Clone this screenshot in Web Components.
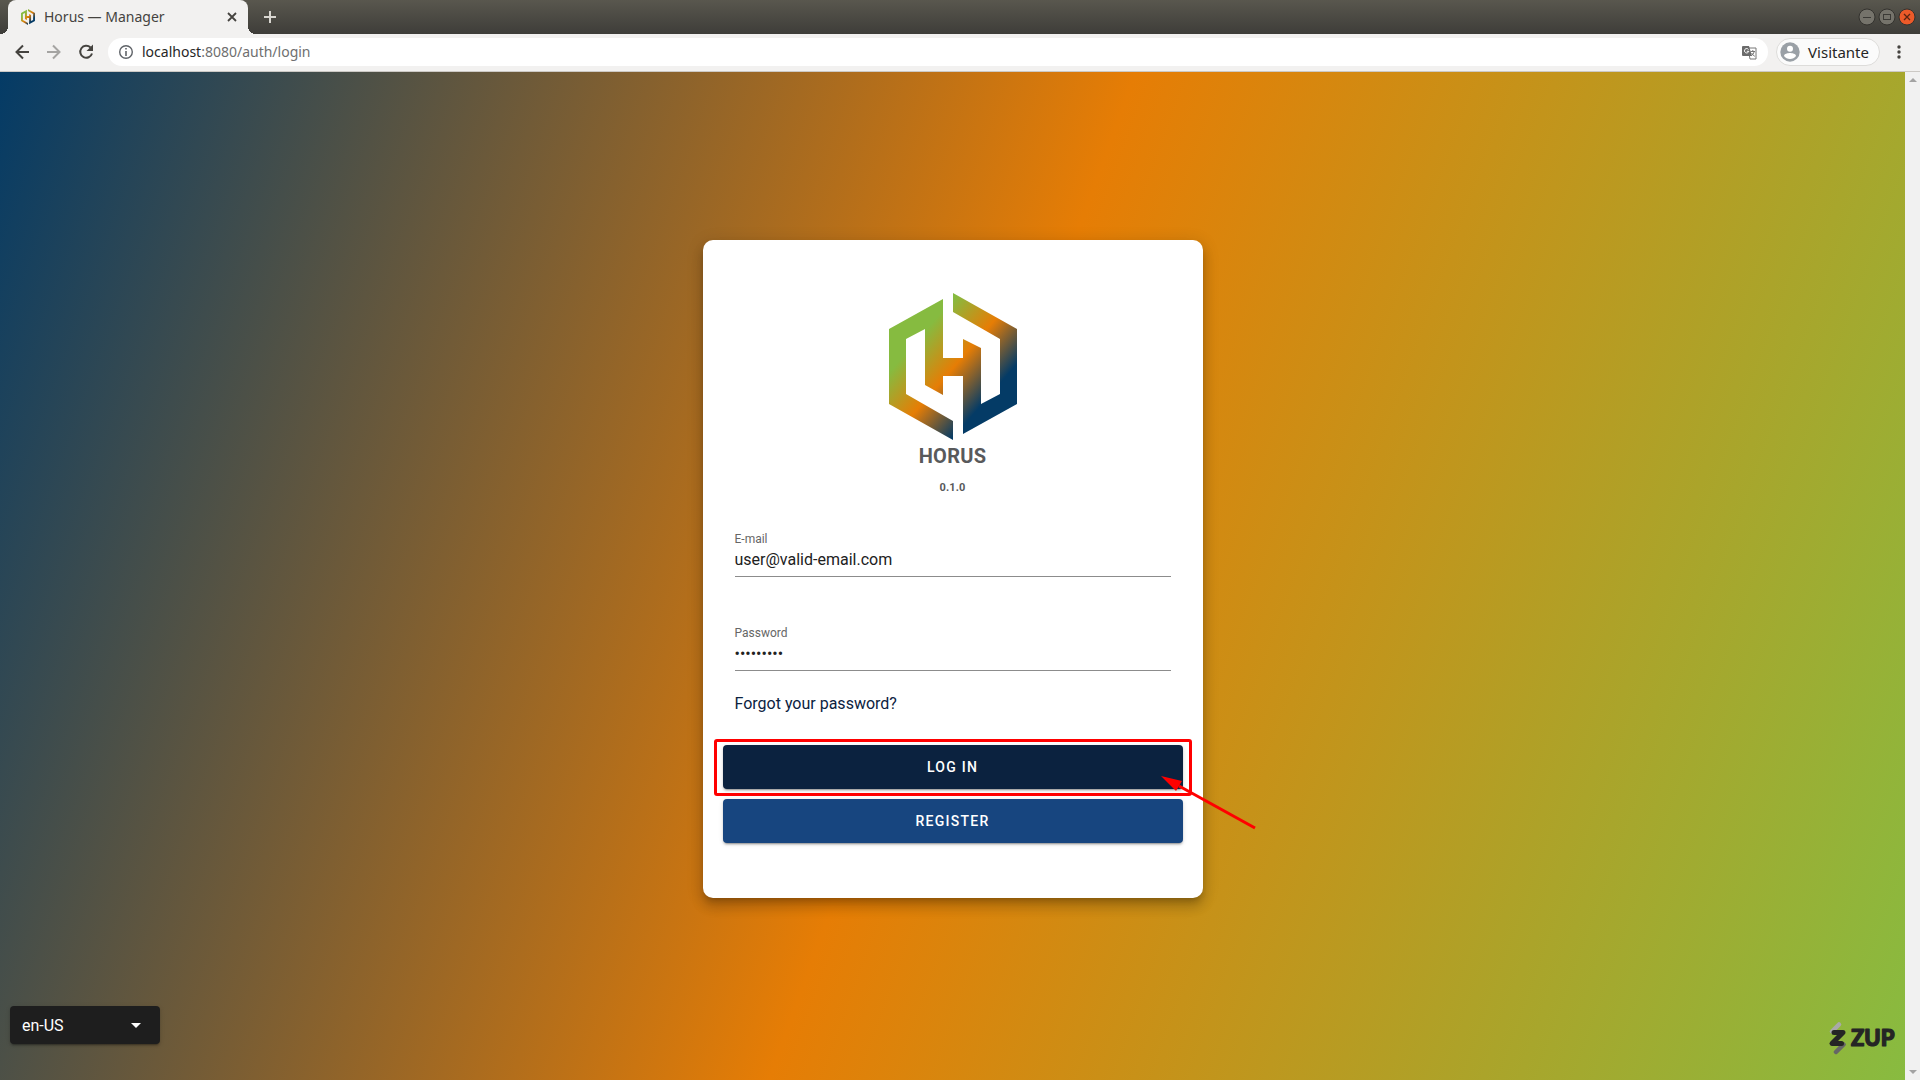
<!DOCTYPE html>
<html lang="en">
<head>
<meta charset="utf-8">
<title>Horus — Manager</title>
<style>
html, body { margin: 0; height: 100%; }
body { font-family: Roboto, "Liberation Sans", sans-serif; overflow: hidden; }
</style>
</head>
<body>
<browser-window>
  <browser-tab slot="tabs">Horus — Manager</browser-tab>
  <login-page>
    <login-card>
      <text-field label="E-mail" type="email" value="user@valid-email.com"></text-field>
      <text-field label="Password" type="password" value="password1"></text-field>
      <forgot-link>Forgot your password?</forgot-link>
      <action-button slot="actions" highlighted>LOG IN</action-button>
      <action-button slot="actions" tone="blue">REGISTER</action-button>
    </login-card>
    <language-select slot="footer"></language-select>
    <zup-logo slot="footer"></zup-logo>
  </login-page>
</browser-window>

<script>
const define = (name, html, setup) => {
  const template = document.createElement('template');
  template.innerHTML = html;
  customElements.define(name, class extends HTMLElement {
    constructor() {
      super();
      this.attachShadow({ mode: 'open' }).append(template.content.cloneNode(true));
    }
    connectedCallback() { if (setup) setup(this, this.shadowRoot); }
  });
};

define('horus-mark', `
<style>
:host { display: block; width: 128px; height: 147px; }
svg { display: block; width: 100%; height: 100%; }
</style>
<svg viewBox="0 0 128 147" aria-hidden="true">
  <defs>
    <linearGradient id="g" gradientUnits="userSpaceOnUse" x1="19" y1="41" x2="101" y2="112">
      <stop offset="0" stop-color="#86bb40"/><stop offset=".1" stop-color="#86bb40"/>
      <stop offset=".52" stop-color="#e67d05"/><stop offset=".94" stop-color="#043b66"/>
      <stop offset="1" stop-color="#043b66"/>
    </linearGradient>
  </defs>
  <path fill="url(#g)" d="M54 6V65H74V46L92 55V111L111 101V46L64 19V0L128 36V111L74 141V83H54V102L36 92V36L17 46V101L64 128V147L0 111V36Z"/>
</svg>`);

define('browser-tab', `
<style>
:host { display: flex; align-items: center; gap: 8px; width: 240px; height: 34px; padding: 0 11px 0 12px; box-sizing: border-box;
  background: #f2f1f0; border-radius: 8px 8px 0 0; color: #45433f; font: 14px/20px "Noto Sans", sans-serif; position: relative; }
:host::before, :host::after { content: ""; position: absolute; bottom: 0; width: 8px; height: 8px; }
:host::before { right: 100%; background: radial-gradient(circle at 0 0, transparent 8px, #f2f1f0 8px); }
:host::after { left: 100%; background: radial-gradient(circle at 100% 0, transparent 8px, #f2f1f0 8px); }
horus-mark { width: 16px; height: 16px; }
span { flex: 1; white-space: nowrap; }
button { border: 0; padding: 0; background: none; width: 10px; height: 10px; }
svg { display: block; }
</style>
<horus-mark></horus-mark><span><slot></slot></span>
<button aria-label="Close tab"><svg width="10" height="10" viewBox="0 0 10 10" stroke="#45433f" stroke-width="1.800"><path d="M1 1L9 9M9 1L1 9"/></svg></button>`);

define('browser-window', `
<style>
:host { display: flex; flex-direction: column; height: 100vh; }
.tabs { display: flex; align-items: center; height: 34px; flex: none; padding: 0 4px 0 8px; background: linear-gradient(#59574e, #3e3d39); }
.new { margin-left: 15px; }
button { border: 0; padding: 0; background: none; display: block; }
svg { display: block; }
.controls { margin-left: auto; display: flex; gap: 2px; }
.bar { display: flex; align-items: center; height: 38px; box-sizing: border-box; flex: none; background: #f2f1f0; border-bottom: 1px solid #ccc9c5; padding: 0 13px 1px 14px; font: 14px/20px "Noto Sans", sans-serif; }
.nav { display: flex; gap: 13px; margin-right: 10px; }
.url { flex: 1; display: flex; align-items: center; gap: 8px; height: 28px; border-radius: 14px; background: #fff; padding: 0 11px 0 10px; margin-right: 8px; min-width: 0; }
.url div { flex: 1; color: #6f6f6f; }
.url b { font-weight: 400; color: #262626; }
.profile { display: flex; align-items: center; gap: 8px; height: 28px; box-sizing: border-box; border: 1px solid #dddcda; border-radius: 14px; background: #fbfbfb; padding: 0 10px 0 3px; margin-right: 11px; color: #262626; font: 15px/20px "Noto Sans", sans-serif; }
main { flex: 1; display: flex; min-height: 0; }
.page { flex: 1; display: flex; min-width: 0; }
.scroll { width: 15px; background: #f1f1f1; display: flex; flex-direction: column; justify-content: space-between; align-items: center; padding: 6px 0; box-sizing: border-box; }
</style>
<div class="tabs">
  <slot name="tabs"></slot>
  <button class="new" aria-label="New tab"><svg width="14" height="14" viewBox="0 0 14 14" stroke="#d8d6d0" stroke-width="2"><path d="M7 1V13M1 7H13"/></svg></button>
  <div class="controls">
    <button aria-label="Minimize"><svg width="18" height="18" viewBox="0 0 18 18"><circle cx="9" cy="9" r="8" fill="#75736b" stroke="#33322e"/><path d="M5 9.500H13" stroke="#3b3a36"/></svg></button>
    <button aria-label="Maximize"><svg width="18" height="18" viewBox="0 0 18 18"><circle cx="9" cy="9" r="8" fill="#75736b" stroke="#33322e"/><rect x="5.500" y="6.500" width="7" height="5" fill="none" stroke="#3b3a36"/></svg></button>
    <button aria-label="Close"><svg width="18" height="18" viewBox="0 0 18 18"><circle cx="9" cy="9" r="8" fill="#ec5a29" stroke="#33322e"/><path d="M6 6L12 12M12 6L6 12" stroke="#5a2412" stroke-width="1.300"/></svg></button>
  </div>
</div>
<div class="bar">
  <div class="nav">
    <button aria-label="Back"><svg width="18" height="18" viewBox="0 0 18 18" fill="none" stroke="#45433f" stroke-width="2"><path d="M15 9H3M9 2.500L2.500 9L9 15.500"/></svg></button>
    <button aria-label="Forward"><svg width="18" height="18" viewBox="0 0 18 18" fill="none" stroke="#a5a4a2" stroke-width="2"><path d="M2 9H14M8 2.500L14.500 9L8 15.500"/></svg></button>
    <button aria-label="Reload"><svg width="22" height="18" viewBox="0 0 22 18"><path d="M14.500 4.500A6 6 0 1 0 16 10.500" fill="none" stroke="#45433f" stroke-width="2"/><path d="M17 1.500V8H10.500Z" fill="#45433f"/></svg></button>
  </div>
  <div class="url">
    <svg width="16" height="16" viewBox="0 0 16 16"><circle cx="8" cy="8" r="6.300" fill="none" stroke="#5f6368" stroke-width="1.400"/><path d="M8 7V12M8 4V5.600" stroke="#5f6368" stroke-width="1.600"/></svg>
    <div><b>localhost</b>:8080/auth/login</div>
    <svg width="15" height="15" viewBox="0 0 15 15"><path d="M6 3H14V14H8Z" fill="#fff" stroke="#777"/><path d="M1 1H7L10 11H1A1 1 0 0 1 0 10V2A1 1 0 0 1 1 1Z" fill="#6b6b6b"/><path d="M8.500 6.500H13M10.800 5V6.500M12.300 6.500Q11.500 9.500 9 11M9.600 8Q11 10.500 12.800 11.300" fill="none" stroke="#777"/><path d="M6.500 4.500A2.200 2.200 0 1 0 6.800 6.300H4.800" fill="none" stroke="#fff"/></svg>
  </div>
  <button class="profile"><svg width="20" height="20" viewBox="0 0 20 20"><circle cx="10" cy="10" r="9.700" fill="#9aa0a6"/><circle cx="10" cy="6.800" r="3" fill="#fff"/><path d="M4 14C4 11.800 8 11 10 11S16 11.800 16 14C14.600 16 12.500 17 10 17S5.400 16 4 14Z" fill="#fff"/></svg>Visitante</button>
  <button aria-label="Menu"><svg width="16" height="16" viewBox="0 0 16 16" fill="#45433f"><circle cx="8" cy="3" r="1.700"/><circle cx="8" cy="8" r="1.700"/><circle cx="8" cy="13" r="1.700"/></svg></button>
</div>
<main>
  <div class="page"><slot></slot></div>
  <div class="scroll">
    <svg width="8" height="4" viewBox="0 0 8 4"><path d="M0 4L4 0L8 4Z" fill="#a3a3a3"/></svg>
    <svg width="8" height="4" viewBox="0 0 8 4"><path d="M0 0L4 4L8 0Z" fill="#a3a3a3"/></svg>
  </div>
</main>`);

define('login-page', `
<style>
:host { flex: 1; display: grid; place-items: center; position: relative; background: linear-gradient(110deg, #043b66, #e67d05 50%, #88bb40); }
footer { position: absolute; left: 10px; right: 9px; bottom: 25px; display: flex; justify-content: space-between; align-items: end; }
.card { margin-bottom: 14px; }
</style>
<div class="card"><slot></slot></div>
<footer><slot name="footer"></slot></footer>`);

define('login-card', `
<style>
:host { display: block; width: 500px; box-sizing: border-box; background: #fff; border-radius: 10px; padding: 53px 20px 55px;
  box-shadow: 0 5px 6px -3px rgba(0,0,0,.2), 0 9px 12px 1px rgba(0,0,0,.14), 0 3px 16px 2px rgba(0,0,0,.12); }
header { display: flex; flex-direction: column; align-items: center; color: #58595b; }
h1 { margin: 0; font-size: 20px; line-height: 32px; font-weight: 700; letter-spacing: .0125em; }
p { margin: 4px 0 0; font-size: 11px; line-height: 24px; font-weight: 700; letter-spacing: .0125em; }
.form { padding: 21px 12px 0; }
.actions { display: grid; gap: 10px; padding-top: 29px; }
</style>
<header><horus-mark></horus-mark><h1>HORUS</h1><p>0.1.0</p></header>
<div class="form"><slot></slot></div>
<div class="actions"><slot name="actions"></slot></div>`);

define('text-field', `
<style>
:host { display: block; margin-bottom: 22px; height: 72px; }
:host(:last-of-type) { margin-bottom: 5px; }
label { display: block; padding-top: 8px; font-size: 12px; line-height: 20px; color: #666; }
input { display: block; width: 100%; box-sizing: border-box; height: 28px; padding: 0 0 6px; border: 0; border-bottom: 1px solid #8c8c8c; background: none; outline: 0; font: 16px Roboto, sans-serif; color: #212121; }
</style>
<label for="field"></label><input id="field">`, (host, root) => {
  root.querySelector('label').textContent = host.getAttribute('label');
  const input = root.querySelector('input');
  input.type = host.getAttribute('type');
  input.value = host.getAttribute('value');
});

define('forgot-link', `
<style>
:host { display: block; }
a { color: #0b223f; text-decoration: none; font-size: 16px; line-height: 24px; }
</style>
<a href="#forgot"><slot></slot></a>`);

define('action-button', `
<style>
:host { display: block; position: relative; }
button { display: block; width: 100%; height: 44px; border: 0; border-radius: 4px; background: #0b223f; color: #fff; font: 500 14px/20px Roboto, sans-serif; letter-spacing: .09em;
  box-shadow: 0 3px 1px -2px rgba(0,0,0,.2), 0 2px 2px 0 rgba(0,0,0,.14), 0 1px 5px 0 rgba(0,0,0,.12); }
:host([tone="blue"]) button { background: #17457f; }
.frame, .arrow { display: none; pointer-events: none; position: absolute; }
:host([highlighted]) .frame { display: block; inset: -6px -9px -7px; border: 3px solid #f00; border-radius: 3px; }
:host([highlighted]) .arrow { display: block; right: -74px; top: 30px; z-index: 1; }
</style>
<button><slot></slot></button>
<div class="frame"></div>
<svg class="arrow" width="96" height="56" viewBox="0 0 96 56"><path d="M18 11L94 53" stroke="#f00" stroke-width="3"/><path d="M0 1L21 6L15 16Z" fill="#f00"/></svg>`);

define('language-select', `
<style>
:host { display: block; position: relative; margin-bottom: 11px; }
select { appearance: none; display: block; width: 150px; height: 38px; border: 0; border-radius: 4px; padding: 0 12px; background: #1e1e1e; color: #fff; font: 16px Roboto, sans-serif;
  box-shadow: 0 3px 1px -2px rgba(0,0,0,.2), 0 2px 2px 0 rgba(0,0,0,.14), 0 1px 5px 0 rgba(0,0,0,.12); }
svg { position: absolute; right: 19px; top: 17px; pointer-events: none; }
</style>
<select aria-label="Language"><option>en-US</option></select>
<svg width="10" height="5" viewBox="0 0 10 5"><path d="M0 0H10L5 5Z" fill="#fff"/></svg>`);

define('zup-logo', `
<style>:host { display: block; } svg { display: block; }</style>
<svg width="68" height="34" viewBox="0 0 68 34" role="img" aria-label="Zup">
  <g fill="none" stroke-linecap="round" stroke-linejoin="round" stroke-width="4.500">
    <path d="M4 10.500L11 3.500" stroke="#a9a9a9"/><path d="M8 31L15.500 23.500" stroke="#666"/><path d="M6 11.500H15L4 22.500H13.500" stroke="#252525" stroke-width="5"/>
  </g>
  <text x="23" y="25" font-family="Lato, sans-serif" font-weight="900" font-size="22" fill="#252525" stroke="#252525" stroke-width="1.200" stroke-linejoin="round">ZUP</text>
</svg>`);
</script>
</body>
</html>
